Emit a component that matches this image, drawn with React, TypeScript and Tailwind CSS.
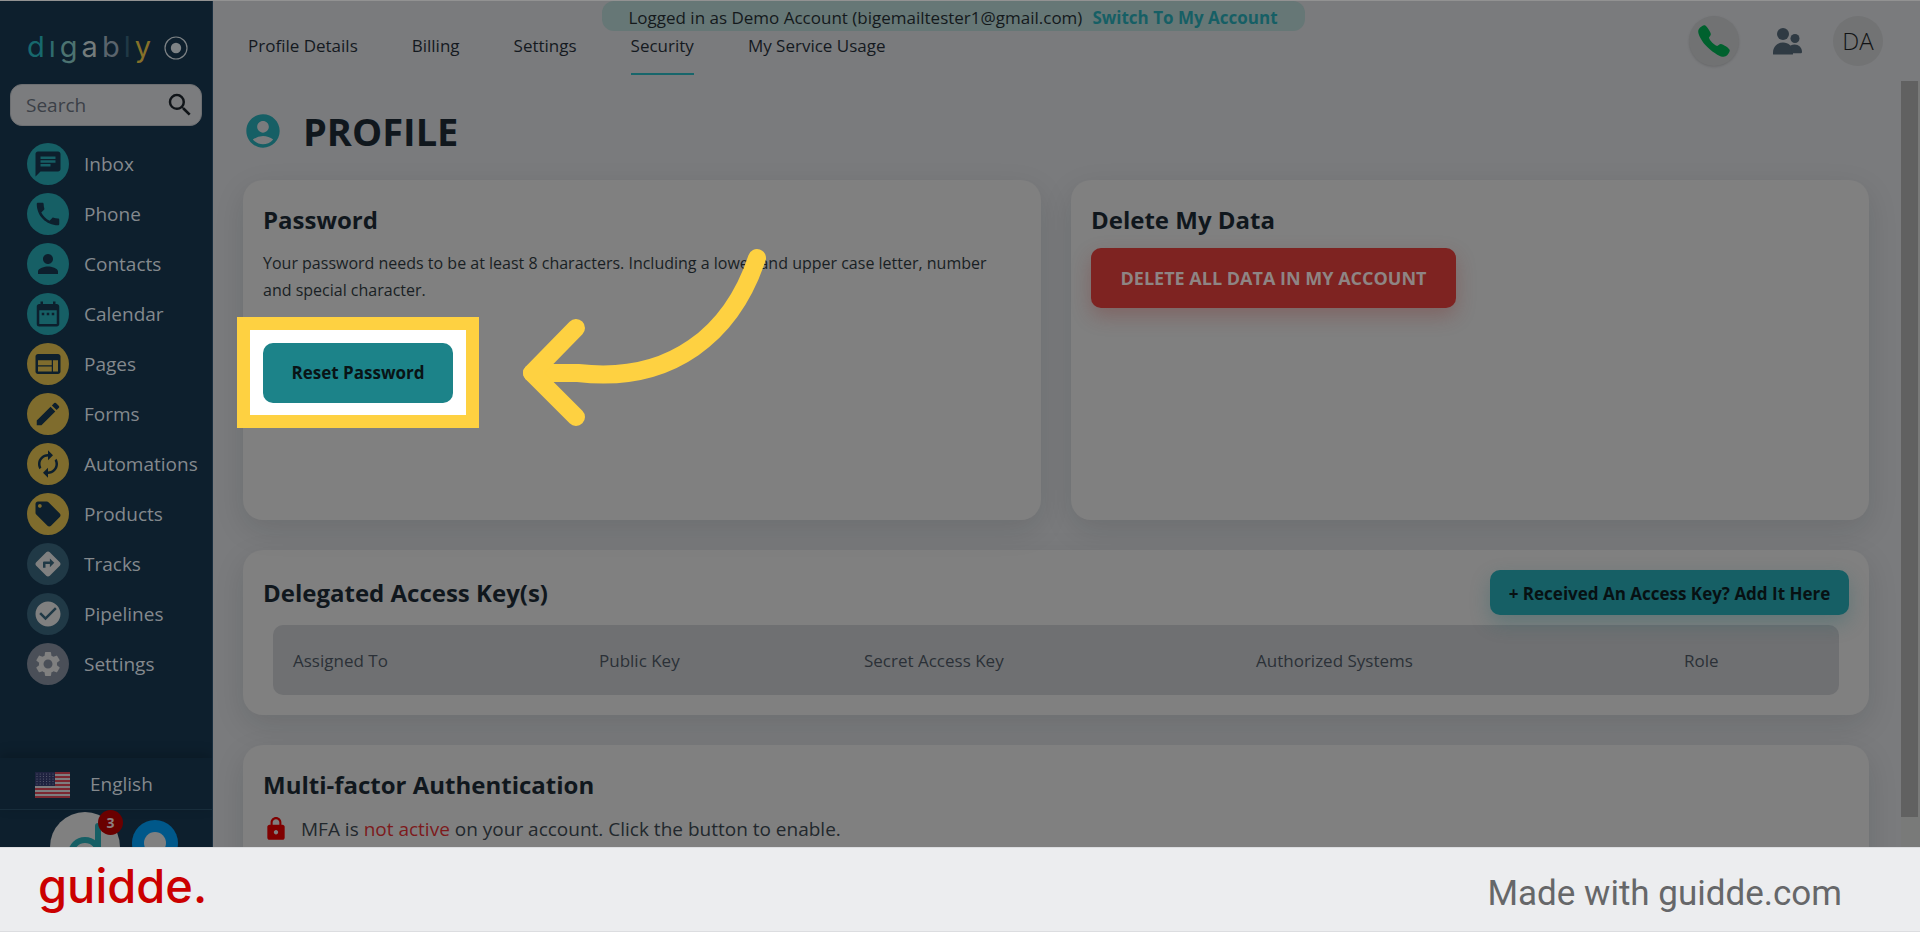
import { clsx } from "clsx";
import type { IconType } from "react-icons";
import { IoCall } from "react-icons/io5";
import {
  MdAccountCircle,
  MdAutorenew,
  MdChat,
  MdCheckCircle,
  MdDateRange,
  MdDirections,
  MdEdit,
  MdLocalOffer,
  MdLock,
  MdPerson,
  MdPhone,
  MdSearch,
  MdSettings,
  MdWeb,
} from "react-icons/md";

interface NavItem {
  label: string;
  icon: IconType;
  tone: string;
}

const TEAL = "bg-[#165f65] text-[#0d1f2d]";
const GOLD = "bg-[#7f6c2d] text-[#0d1f2d]";
const SLATE = "bg-[#203946] text-[#808080]";
const GRAY = "bg-[#4a4f58] text-[#808080]";

const navItems: NavItem[] = [
  { label: "Inbox", icon: MdChat, tone: TEAL },
  { label: "Phone", icon: MdPhone, tone: TEAL },
  { label: "Contacts", icon: MdPerson, tone: TEAL },
  { label: "Calendar", icon: MdDateRange, tone: TEAL },
  { label: "Pages", icon: MdWeb, tone: GOLD },
  { label: "Forms", icon: MdEdit, tone: GOLD },
  { label: "Automations", icon: MdAutorenew, tone: GOLD },
  { label: "Products", icon: MdLocalOffer, tone: GOLD },
  { label: "Tracks", icon: MdDirections, tone: SLATE },
  { label: "Pipelines", icon: MdCheckCircle, tone: SLATE },
  { label: "Settings", icon: MdSettings, tone: GRAY },
];

const logoLetters = [
  { char: "d", color: "text-[#17686d]" },
  { char: "ı", color: "text-[#2f6b6e]" },
  { char: "g", color: "text-[#4c7371]" },
  { char: "a", color: "text-[#747c7c]" },
  { char: "b", color: "text-[#5a646c]" },
  { char: "l", color: "text-[#203946]" },
  { char: "y", color: "text-[#857129]" },
];

const tabs = ["Profile Details", "Billing", "Settings", "Security", "My Service Usage"];

const columns = [
  { label: "Assigned To", width: "w-[306px]" },
  { label: "Public Key", width: "w-[265px]" },
  { label: "Secret Access Key", width: "w-[392px]" },
  { label: "Authorized Systems", width: "w-[428px]" },
  { label: "Role", width: "w-auto" },
];

function Logo() {
  return (
    <div className="flex items-center justify-between pl-[27px] pr-6">
      <a
        href="#"
        aria-label="digably"
        className="flex gap-1 pt-[2px] font-['Inter',sans-serif] text-[29px] leading-10"
      >
        {logoLetters.map((letter) => (
          <span key={letter.char} className={letter.color}>
            {letter.char}
          </span>
        ))}
      </a>
      <button type="button" aria-label="Collapse menu" className="mt-1">
        <svg viewBox="0 0 24 24" className="size-6">
          <circle cx="12" cy="12" r="11" fill="none" stroke="#7d8285" strokeWidth="1.2" />
          <circle cx="12" cy="12" r="5.2" fill="#7d8285" />
        </svg>
      </button>
    </div>
  );
}

function Flag() {
  return (
    <svg viewBox="0 0 35 26" className="h-[26px] w-[35px]">
      <rect width="35" height="26" fill="#7d7d7f" />
      {[0, 2, 4, 6, 8, 10, 12].map((i) => (
        <rect key={i} y={i * 2} width="35" height="2" fill="#7b2730" />
      ))}
      <rect width="20" height="14" fill="#1f2340" />
      {[0, 1, 2, 3, 4].map((row) =>
        [0, 1, 2, 3, 4, 5].map((col) => (
          <circle
            key={`${row}-${col}`}
            cx={2 + col * 3.2}
            cy={2 + row * 2.5}
            r="0.5"
            fill="#6d6f80"
          />
        ))
      )}
    </svg>
  );
}

function Sidebar() {
  return (
    <aside className="flex w-[213px] shrink-0 flex-col overflow-hidden border-r border-[#1a2f40] bg-[#0d1f2d] pt-6">
      <Logo />

      <div className="mx-[10px] mt-[17px] flex h-[42px] shrink-0 items-center rounded-xl border border-[#6c6e71] bg-[#7b7c7e] pl-[15px] pr-[6px]">
        <input
          type="text"
          aria-label="Search"
          placeholder="Search"
          className="h-full min-w-0 flex-1 bg-transparent text-[19px] outline-none placeholder:text-[#3b4047]"
        />
        <button type="button" aria-label="Search">
          <MdSearch className="size-[30px] text-[#101418]" />
        </button>
      </div>

      <nav className="mt-[17px] flex flex-col gap-2">
        {navItems.map(({ label, icon: Icon, tone }) => (
          <a key={label} href="#" className="flex items-center gap-[15px] pl-[27px] text-[#84898d]">
            <span
              className={clsx(
                "flex size-[42px] shrink-0 items-center justify-center rounded-full",
                tone
              )}
            >
              <Icon className="size-[30px]" />
            </span>
            <span className="text-[19px] font-medium">{label}</span>
          </a>
        ))}
      </nav>

      <div className="mt-auto shrink-0">
        <button
          type="button"
          className="flex h-[52px] w-full items-center gap-5 border-b border-[#182d3b] pl-[35px] pt-[2px] text-[19px] font-medium text-[#84898d] shadow-[0_-4px_12px_rgba(0,0,0,0.2)]"
        >
          <Flag />
          English
        </button>
        {/* Chat launchers, cut off by the bottom of the panel */}
        <div className="flex h-[37px] items-start gap-3 overflow-hidden pl-[50px] pt-[2px]">
          <div className="relative">
            <button
              type="button"
              aria-label="Open support"
              className="block size-[70px] overflow-hidden rounded-full bg-[#808080]"
            >
              <svg viewBox="0 0 70 70" fill="none" stroke="#165f65" strokeWidth="6">
                <circle cx="35" cy="42" r="14" />
                <path d="M48 14 V56" strokeLinecap="round" />
              </svg>
            </button>
            <span className="absolute -right-[3px] -top-[2px] flex size-[25px] items-center justify-center rounded-full bg-[#6a0000] text-sm font-bold text-[#8c8080]">
              3
            </span>
          </div>
          <button type="button" aria-label="Open chat" className="mt-2">
            <svg viewBox="0 0 46 46" className="size-[46px]">
              <circle cx="23" cy="23" r="23" fill="#00588a" />
              <circle cx="23" cy="23" r="11" fill="#808080" />
            </svg>
          </button>
        </div>
      </div>
    </aside>
  );
}

function Header() {
  return (
    <header className="relative flex h-[80px] shrink-0 items-start justify-between pl-[35px] pr-[37px]">
      <div className="absolute left-1/2 top-0 flex h-[30px] min-w-[703px] -translate-x-[465px] items-center justify-center gap-[10px] rounded-xl bg-[#667776] px-6 pt-1 text-[17px] text-[#14191c]">
        <span className="whitespace-nowrap">
          Logged in as Demo Account (bigemailtester1@gmail.com)
        </span>
        <a href="#" className="whitespace-nowrap font-bold text-[#165f65]">
          Switch To My Account
        </a>
      </div>

      <nav className="flex gap-[54px] pt-[31px]">
        {tabs.map((tab) => (
          <a
            key={tab}
            href="#"
            aria-current={tab === "Security" ? "page" : undefined}
            className={clsx(
              "h-[43px] border-b-2 text-[17px] font-medium leading-7 text-[#14191f]",
              tab === "Security" ? "border-[#17666b]" : "border-transparent"
            )}
          >
            {tab}
          </a>
        ))}
      </nav>

      <div className="flex items-center pt-[15px]">
        <button
          type="button"
          aria-label="Call"
          className="flex size-[50px] items-center justify-center rounded-full bg-[#717273] shadow-sm"
        >
          <IoCall className="size-9 text-[#00612e]" />
        </button>
        <button type="button" aria-label="Team" className="ml-[34px]">
          <svg viewBox="0 0 29 27" className="h-[27px] w-[29px]" fill="#2f3a43">
            <circle cx="10" cy="6" r="6" />
            <circle cx="22" cy="10.500" r="4.500" />
            <path d="M0 26 V24.500 C0 18.500 4.500 14.500 10 14.500 S20 18.500 20 24.500 V26 Q20 26.500 19.500 26.500 H0.500 Q0 26.500 0 26Z" />
            <path d="M17.500 17.500 C23 14.500 29 18 29 24 Q29 25.300 27.800 25.300 H19Z" />
          </svg>
        </button>
        <button
          type="button"
          className="ml-[31px] flex size-[50px] items-center justify-center rounded-full bg-[#727374] text-2xl font-light text-[#111315]"
        >
          DA
        </button>
      </div>
    </header>
  );
}

function Card({ className, children }: { className?: string; children: React.ReactNode }) {
  return (
    <section
      className={clsx(
        "rounded-[20px] bg-[#808080] px-5 shadow-[0_10px_30px_rgba(20,24,28,0.12)]",
        className
      )}
    >
      {children}
    </section>
  );
}

function CardTitle({ children }: { children: React.ReactNode }) {
  return <h2 className="text-2xl font-bold leading-8 text-[#10171d]">{children}</h2>;
}

function PasswordCard() {
  return (
    <Card className="relative h-[340px] pt-6">
      <CardTitle>Password</CardTitle>
      <p className="mt-[14px] pr-5 text-base leading-[27px] text-[#191f24]">
        Your password needs to be at least 8 characters. Including a lower and upper case letter,
        number and special character.
      </p>
      <div className="-ml-[26px] mt-[13px] w-fit border-[13px] border-[#fed141] bg-white px-[13px] pb-3 pt-[13px]">
        <button
          type="button"
          className="h-[60px] w-[190px] rounded-[10px] bg-[#1c8389] text-[17px] font-bold text-[#091416]"
        >
          Reset Password
        </button>
      </div>
      {/* Hand-drawn arrow pointing at the button */}
      <svg
        viewBox="0 0 250 180"
        className="absolute left-[277px] top-[67px] h-[180px] w-[250px]"
        fill="none"
        stroke="#fed141"
        strokeWidth="18"
        strokeLinecap="round"
        strokeLinejoin="round"
      >
        <path d="M237 11 C212 86 152 137 58 126 L12 126" />
        <path d="M56 81 L12 126 L56 170" />
      </svg>
    </Card>
  );
}

function DeleteCard() {
  return (
    <Card className="h-[340px] pt-6">
      <CardTitle>Delete My Data</CardTitle>
      <button
        type="button"
        className="mt-3 h-[60px] w-[365px] rounded-[10px] bg-[#7e2321] text-lg font-bold text-[#8e8584] shadow-[0_8px_20px_rgba(126,35,33,0.3)]"
      >
        DELETE ALL DATA IN MY ACCOUNT
      </button>
    </Card>
  );
}

function AccessKeysCard() {
  return (
    <Card className="py-5">
      <div className="flex items-center justify-between">
        <CardTitle>Delegated Access Key(s)</CardTitle>
        <button
          type="button"
          className="h-[45px] w-[359px] rounded-[10px] bg-[#165f65] pt-[2px] text-[17px] font-bold text-[#071113] shadow-[0_8px_20px_rgba(22,95,101,0.3)]"
        >
          + Received An Access Key? Add It Here
        </button>
      </div>
      <div className="mx-[10px] mt-[10px] overflow-hidden rounded-[10px] bg-[#6f7072]">
        <table className="w-full table-fixed text-left">
          <thead>
            <tr className="h-[70px]">
              {columns.map((column) => (
                <th
                  key={column.label}
                  className={clsx(
                    "px-5 pt-[2px] text-[17px] font-medium text-[#2b3037]",
                    column.width
                  )}
                >
                  {column.label}
                </th>
              ))}
            </tr>
          </thead>
        </table>
      </div>
    </Card>
  );
}

function MfaCard() {
  return (
    <Card className="pb-8 pt-6">
      <CardTitle>Multi-factor Authentication</CardTitle>
      <div className="mt-3 flex items-center gap-3 text-[#22282d]">
        <MdLock className="size-[26px] text-[#800000]" />
        <p className="text-[19px] leading-8">
          MFA is <span className="text-[#7d1a1c]">not active</span> on your account. Click the
          button to enable.
        </p>
      </div>
    </Card>
  );
}

export default function App() {
  return (
    <div className="flex h-screen flex-col overflow-hidden bg-[#7a7b7d] font-['Open_Sans','Noto_Sans',sans-serif]">
      <div className="flex min-h-0 flex-1 border-t border-[#929292]">
        <Sidebar />
        <div className="flex min-w-0 flex-1 flex-col">
          <Header />
          <div className="flex min-h-0 flex-1">
            <main className="min-w-0 flex-1 overflow-hidden pl-[30px] pr-8">
              <div className="flex h-[99px] items-center gap-5">
                <MdAccountCircle className="size-10 text-[#165f65]" />
                <h1 className="text-[38px] font-bold leading-none text-[#10171d]">PROFILE</h1>
              </div>
              <div className="flex flex-col gap-[30px]">
                <div className="grid grid-cols-2 gap-[30px]">
                  <PasswordCard />
                  <DeleteCard />
                </div>
                <AccessKeysCard />
                <MfaCard />
              </div>
            </main>
            {/* Scrollbar */}
            <div className="w-[19px] shrink-0 bg-[#797a79] pb-[30px] pr-[2px]">
              <div className="h-full bg-[#616161]" />
            </div>
          </div>
        </div>
      </div>

      <footer className="flex h-[85px] shrink-0 items-center justify-between border-y border-[#dcdde0] bg-[#ecedef] pl-[38px] pr-[78px]">
        <a
          href="#"
          className="pb-2 font-['Inter',sans-serif] text-[47px] font-medium leading-none text-[#cb0000]"
        >
          guidde.
        </a>
        <span className="pt-2 font-['Roboto',sans-serif] text-[35px] leading-none text-[#666769]">
          Made with guidde.com
        </span>
      </footer>
    </div>
  );
}
